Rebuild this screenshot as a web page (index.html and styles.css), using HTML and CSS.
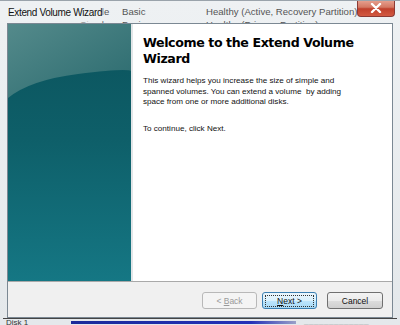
FILE: index.html
```html
<!DOCTYPE html>
<html>
<head>
<meta charset="utf-8">
<link rel="stylesheet" href="styles.css">
</head>
<body>
<div class="window">
  <div class="titlebar">
    <div class="behind">
      <span>Simple</span><span>Basic</span><span>Healthy (Active, Recovery Partition)</span>
      <span>Simple</span><span>Basic</span><span>Healthy (Primary Partition)</span>
    </div>
    <div class="title">Extend Volume Wizard</div>
    <div class="close">
      <svg width="12" height="10" viewBox="0 0 12 10"><path d="M2 1 L10 9 M10 1 L2 9" stroke="#fff" stroke-width="2.4" stroke-linecap="round"/></svg>
    </div>
  </div>
  <div class="client">
    <div class="main">
      <div class="side">
        <svg class="arc" width="123" height="257" viewBox="0 0 123 257" preserveAspectRatio="none">
          <defs>
            <linearGradient id="base" x1="0" y1="0" x2="0" y2="1">
              <stop offset="0" stop-color="#0b535c"/>
              <stop offset="0.45" stop-color="#0e5f69"/>
              <stop offset="1" stop-color="#157784"/>
            </linearGradient>
            <linearGradient id="hl" x1="0" y1="0" x2="1" y2="1">
              <stop offset="0" stop-color="#548a8b"/>
              <stop offset="1" stop-color="#2a6a6e"/>
            </linearGradient>
          </defs>
          <rect width="123" height="257" fill="url(#base)"/>
          <path d="M0 74 Q22 56 70 50 T123 47 L123 0 L0 0 Z" fill="url(#hl)"/>
        </svg>
      </div>
      <div class="content">
        <h1>Welcome to the Extend Volume Wizard</h1>
        <p>This wizard helps you increase the size of simple and spanned volumes. You can extend a volume&nbsp; by adding space from one or more additional disks.</p>
        <p>To continue, click Next.</p>
      </div>
    </div>
    <div class="buttons">
      <button class="btn disabled">&lt; <u>B</u>ack</button>
      <button class="btn primary"><span><u>N</u>ext &gt;</span></button>
      <button class="btn cancel">Cancel</button>
    </div>
  </div>
  <div class="under">
    <span class="disk">Disk 1</span>
    <span class="bar"></span>
    <span class="rest">▂▂▂▂▂▂▂▂▂▂▂▂▂</span>
  </div>
</div>
</body>
</html>
```
FILE: styles.css
```css
html, body {
  margin: 0;
  padding: 0;
}
body {
  width: 400px;
  height: 325px;
  overflow: hidden;
  background: #e6eaed;
  font-family: "Liberation Sans", Arial, sans-serif;
}
.window {
  display: flex;
  flex-direction: column;
  height: 325px;
  background: linear-gradient(180deg, #eef1f3 0%, #e4e8eb 100%);
  border-top: 1px solid #9aa3ab;
  box-sizing: border-box;
}
.titlebar {
  height: 22px;
  display: grid;
  grid-template-columns: 1fr auto;
  overflow: hidden;
}
.behind {
  grid-area: 1 / 1;
  display: grid;
  grid-template-columns: 42px 84px auto;
  grid-auto-rows: 13px;
  padding: 4px 0 0 80px;
  font-size: 9.6px;
  line-height: 13px;
  color: #555;
  white-space: nowrap;
}
.title {
  grid-area: 1 / 1;
  justify-self: start;
  align-self: start;
  margin: 4px 0 0 0;
  padding: 1px 0 2px 8px;
  font-family: "Liberation Sans", Arial, sans-serif;
  font-size: 10px;
  letter-spacing: -0.35px;
  line-height: 13px;
  color: #111;
  background: #eef1f3;
  box-shadow: 2px 0 3px 1px #eef1f3;
  width: 91px;
  white-space: nowrap;
}
.close {
  grid-area: 1 / 2;
  width: 38px;
  height: 17px;
  margin: -1px 7px 0 0;
  border: 1px solid #8c3a34;
  border-top: none;
  border-radius: 0 0 4px 4px;
  background: linear-gradient(180deg, #e8a493 0%, #d47863 45%, #c0402c 55%, #d25a42 100%);
  display: flex;
  align-items: center;
  justify-content: center;
  box-sizing: border-box;
}
.client {
  margin: 0 7px 0 7px;
  height: 295px;
  border: 1px solid #7b8893;
  display: flex;
  flex-direction: column;
  background: #fff;
  box-sizing: border-box;
}
.main {
  flex: 0 0 257px;
  display: flex;
  border-bottom: 1px solid #a9a9a9;
}
.side {
  width: 123px;
  height: 257px;
  border-right: 2px solid #e2e6e8;
}
.arc {
  display: block;
}
.content {
  flex: 1;
  padding: 11px 10px 0 10px;
  color: #111;
}
h1 {
  margin: 0 0 10px 0;
  font-family: "DejaVu Sans", sans-serif;
  font-weight: bold;
  font-size: 12.6px;
  line-height: 15.5px;
  letter-spacing: -0.4px;
  color: #000;
  width: 230px;
}
p {
  margin: 0 0 16px 0;
  font-size: 8.1px;
  line-height: 10.5px;
  width: 205px;
}
.buttons {
  flex: 1;
  background: #f0f0f0;
  display: flex;
  align-items: center;
  justify-content: flex-end;
  padding: 2px 9px 0 0;
}
.btn {
  height: 17px;
  width: 55px;
  margin-left: 5px;
  padding: 0;
  font-family: "Liberation Sans", Arial, sans-serif;
  font-size: 8.5px;
  border-radius: 3px;
  border: 1px solid #707070;
  background: linear-gradient(180deg, #f3f3f3 0%, #ebebeb 50%, #dddddd 51%, #cfcfcf 100%);
  color: #111;
}
.btn.disabled {
  border-color: #b8b8b8;
  background: #f4f4f4;
  color: #9a9a9a;
}
.btn.primary {
  border-color: #3c7fb1;
  background: linear-gradient(180deg, #eaf6fd 0%, #d9f0fc 50%, #bee6fd 51%, #a7d9f5 100%);
  padding: 2px;
}
.btn.primary span {
  display: block;
  border: 1px dotted #333;
  line-height: 10px;
}
.btn.cancel {
  margin-left: 10px;
  width: 56px;
}
.under {
  flex: 1;
  display: flex;
  align-items: center;
  border-top: 1px solid #444;
  margin: 0 3px;
  font-size: 8px;
  overflow: hidden;
  white-space: nowrap;
  color: #333;
}
.disk {
  width: 65px;
  padding-left: 3px;
}
.bar {
  width: 225px;
  height: 3px;
  background: linear-gradient(90deg, #1a2a9a, #2330b8 80%, #9aa0c8);
}
.rest {
  color: #999;
  margin-left: 8px;
  font-size: 6px;
}
```
